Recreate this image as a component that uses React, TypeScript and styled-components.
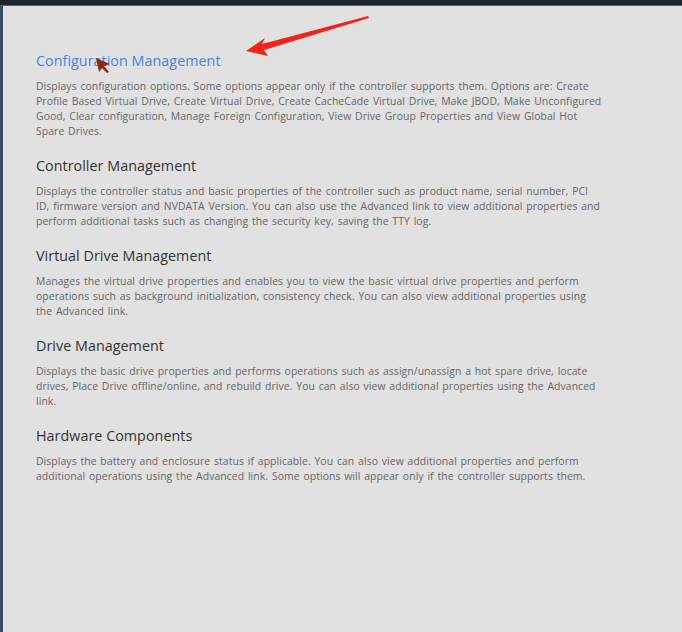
import React from "react";
import styled, { createGlobalStyle } from "styled-components";

const Global = createGlobalStyle`
  html, body { margin: 0; padding: 0; background: #e1e1e1; }
  body { font-family: "Open Sans", "DejaVu Sans", sans-serif; }
`;

const Screen = styled.div`
  position: relative;
  width: 682px;
  height: 632px;
  background: #e1e1e1;
  overflow: hidden;
  display: flex;
  flex-direction: column;
`;

const TopBar = styled.div`
  height: 5px;
  flex: none;
  background: #1d242c;
  border-bottom: 1px solid #5a6470;
`;

const Body = styled.div`
  flex: 1;
  display: flex;
`;

const SideEdge = styled.div`
  width: 3px;
  flex: none;
  background: #3b4866;
`;

const Content = styled.main`
  flex: 1;
  padding: 45px 0 0 33px;
  display: flex;
  flex-direction: column;
  gap: 17px;
`;

const Section = styled.section`
  display: flex;
  flex-direction: column;
  gap: 9px;
  max-width: 566px;
`;

const Title = styled.h2<{ $link?: boolean }>`
  margin: 0;
  font-size: 14.3px;
  font-weight: 400;
  line-height: 19px;
  letter-spacing: 0.05px;
  color: ${(p) => (p.$link ? "#4a82ec" : "#333333")};
`;

const Text = styled.p`
  margin: 0;
  font-size: 10.4px;
  line-height: 15px;
  letter-spacing: 0.08px;
  word-spacing: 1px;
  color: #666666;
`;

const Overlay = styled.svg`
  position: absolute;
  left: 0;
  top: 0;
  pointer-events: none;
`;

const sections = [
  {
    title: "Configuration Management",
    link: true,
    text: "Displays configuration options. Some options appear only if the controller supports them. Options are: Create Profile Based Virtual Drive, Create Virtual Drive, Create CacheCade Virtual Drive, Make JBOD, Make Unconfigured Good, Clear configuration, Manage Foreign Configuration, View Drive Group Properties and View Global Hot Spare Drives.",
  },
  {
    title: "Controller Management",
    text: "Displays the controller status and basic properties of the controller such as product name, serial number, PCI ID, firmware version and NVDATA Version. You can also use the Advanced link to view additional properties and perform additional tasks such as changing the security key, saving the TTY log.",
  },
  {
    title: "Virtual Drive Management",
    text: "Manages the virtual drive properties and enables you to view the basic virtual drive properties and perform operations such as background initialization, consistency check. You can also view additional properties using the Advanced link.",
  },
  {
    title: "Drive Management",
    text: "Displays the basic drive properties and performs operations such as assign/unassign a hot spare drive, locate drives, Place Drive offline/online, and rebuild drive. You can also view additional properties using the Advanced link.",
  },
  {
    title: "Hardware Components",
    text: "Displays the battery and enclosure status if applicable. You can also view additional properties and perform additional operations using the Advanced link. Some options will appear only if the controller supports them.",
  },
];

export default function App() {
  return (
    <Screen>
      <Global />
      <TopBar />
      <Body>
        <SideEdge />
        <Content>
          {sections.map((s) => (
            <Section key={s.title}>
              <Title $link={s.link}>{s.title}</Title>
              <Text>{s.text}</Text>
            </Section>
          ))}
        </Content>
      </Body>
      <Overlay width="682" height="632" viewBox="0 0 682 632">
        <path
          d="M368 16 L262 44 L265 38 L246 51 L268 56 L264 50 L369 18 Z"
          fill="#f5221a"
        />
        <path
          d="M96 58 L110 64 L104 66 L109 72 L107 73 L102 68 L99 72 Z"
          fill="#8e2c12"
        />
      </Overlay>
    </Screen>
  );
}
